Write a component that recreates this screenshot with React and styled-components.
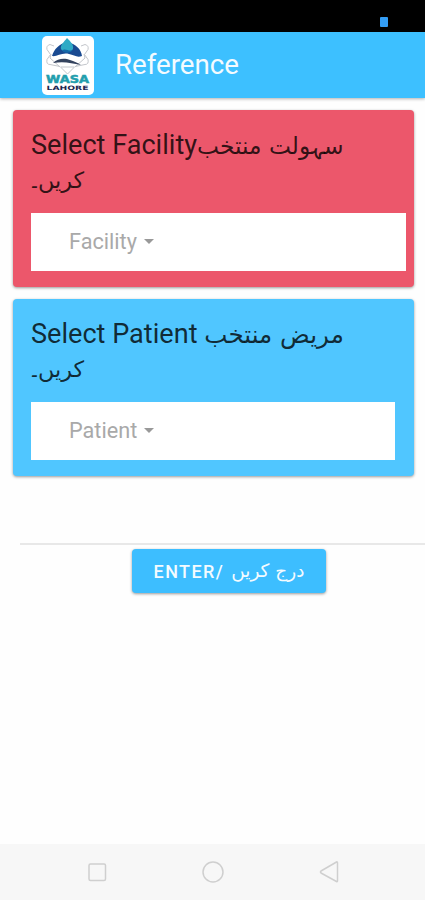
import React from "react";
import styled, { createGlobalStyle } from "styled-components";

const GlobalStyle = createGlobalStyle`
	* {
		box-sizing: border-box;
	}
	body {
		margin: 0;
		background: #fefefe;
		font-family: Roboto, "DejaVu Sans", sans-serif;
	}
`;

const Screen = styled.div`
	width: 100%;
	height: 900px;
	display: flex;
	flex-direction: column;
	overflow: hidden;
	background: #fefefe;
`;

const StatusBar = styled.div`
	height: 32px;
	padding: 0 37px 5px 0;
	display: flex;
	justify-content: flex-end;
	align-items: flex-end;
	background: #000;
`;

const Battery = styled.div`
	width: 8px;
	height: 10px;
	border-radius: 1px;
	background: #339df5;
`;

const Toolbar = styled.header`
	height: 66px;
	padding-left: 42px;
	display: flex;
	align-items: center;
	background: #3dc0ff;
	box-shadow: 0 1px 3px rgba(0, 0, 0, 0.3);
`;

const LogoTile = styled.div`
	width: 52px;
	height: 59px;
	border-radius: 5px;
	background: #fff;
`;

const Title = styled.h1`
	margin: 0 0 0 21px;
	font-size: 27.7px;
	line-height: 34px;
	font-weight: 400;
	color: #f4fbff;
`;

const Content = styled.main`
	flex: 1;
	padding-top: 12px;
`;

const Card = styled.section`
	height: 177px;
	margin: 0 11px 12px 13px;
	padding: 18px 0 0 18px;
	border-radius: 4px;
	background: ${props => props.$color};
	box-shadow: 0 1px 3px rgba(0, 0, 0, 0.4);
`;

const CardTitle = styled.h2`
	width: 330px;
	height: 68px;
	margin: 0 0 17px;
	font-size: 27.1px;
	line-height: 34px;
	font-weight: 400;
	color: rgba(0, 0, 0, 0.8);
`;

const Urdu = styled.span`
	font-family: "DejaVu Sans", sans-serif;
	font-size: ${props => props.$size}px;
	line-height: 1;
	letter-spacing: 0;
`;

// the Urdu full stop has wide side bearings
const Stop = styled.span`
	margin: 0 -3px 0 -3px;
`;

const Select = styled.div`
	width: ${props => props.$width}px;
	height: 58px;
	padding: 0 0 2px 38px;
	display: flex;
	align-items: center;
	background: #fff;
	font-size: 21.7px;
	color: #a9a9a9;
`;

const Caret = styled.span`
	margin-left: 7px;
	border: 5.5px solid transparent;
	border-top-color: #999;
	border-bottom: 0;
`;

const Divider = styled.hr`
	height: 2px;
	margin: 67px 0 4px 20px;
	border: 0;
	background: #e8e8e8;
`;

const EnterButton = styled.button`
	width: 194px;
	height: 44px;
	margin-left: 132px;
	padding: 1px 0 0;
	display: flex;
	justify-content: center;
	align-items: center;
	gap: 7px;
	border: 0;
	border-radius: 4px;
	background: #3dbeff;
	box-shadow: 0 1px 3px rgba(0, 0, 0, 0.4);
	font-family: Roboto, sans-serif;
	font-size: 18px;
	font-weight: 500;
	letter-spacing: 1.4px;
	color: #f4fbff;
`;

const NavBar = styled.nav`
	height: 56px;
	padding: 0 85px 0 86px;
	display: flex;
	justify-content: space-between;
	align-items: center;
	background: #f7f7f7;

	svg {
		fill: none;
		stroke: #cfcfcf;
		stroke-width: 1.5;
		stroke-linejoin: round;
	}
`;

function Logo() {
	return (
		<svg width="52" height="59" viewBox="0 0 52 59">
			<g fill="none" stroke="#c3c6cb" strokeWidth="1">
				<path d="M12 10l-4-1.500q-4 1-3 5l3.500 5-3.500 5q-1 5 3 5l10 2 7.500 7.500 7.500-7.500 10-2q4 0 3-5l-3.500-5 3.500-5q1-4-3-5l-4 1.500" />
				<path d="M9 18l-1 4 10 9M42 18l1 4-10 9M19 31h13" />
			</g>
			<path d="M10 20C12 13 17 8 25 6c9 2 14 7 15 14-5 2-8-1-13-2-7-2-12 3-17 2z" fill="#194a91" />
			<path d="M25 2c4 4 7 7 6 11-2 4-10 4-12 0-1-4 3-7 6-11z" fill="#2faac5" />
			<path d="M20 14c4-2 7 2 11 0-2 3-9 4-11 0z" fill="#1468a8" />
			<path d="M10 23c8-4 13-4 18-1 4 2 8 2 13 0-5 5-10 4-15 2-6-2-10-2-16-1z" fill="#fff" />
			<path d="M11 27c5-5 12-5 17-3 4 1 8 3 11 5-10-2-17-4-28-2z" fill="#34435e" />
			<g fontFamily="DejaVu Sans" fontWeight="700">
				<text
					x="4"
					y="46.500"
					textLength="43"
					lengthAdjust="spacingAndGlyphs"
					fontSize="10"
					fill="#229ead"
					stroke="#229ead"
					strokeWidth=".5"
				>
					WASA
				</text>
				<text x="4.500" y="54" textLength="42" lengthAdjust="spacingAndGlyphs" fontSize="6" fill="#1a2550">
					LAHORE
				</text>
			</g>
		</svg>
	);
}

export default function App() {
	return (
		<Screen>
			<GlobalStyle />
			<StatusBar>
				<Battery />
			</StatusBar>
			<Toolbar>
				<LogoTile>
					<Logo />
				</LogoTile>
				<Title>Reference</Title>
			</Toolbar>
			<Content>
				<Card $color="#ec576b">
					<CardTitle>
						Select Facility<Urdu $size={23.3}>سہولت منتخب</Urdu>{" "}
						<Urdu $size={22.3}>
							کریں<Stop>۔</Stop>
						</Urdu>
					</CardTitle>
					<Select $width={375}>
						Facility <Caret />
					</Select>
				</Card>
				<Card $color="#50c6ff">
					<CardTitle>
						Select Patient <Urdu $size={24.6}>مریض منتخب</Urdu>{" "}
						<Urdu $size={22.3}>
							کریں<Stop>۔</Stop>
						</Urdu>
					</CardTitle>
					<Select $width={364}>
						Patient <Caret />
					</Select>
				</Card>
				<Divider />
				<EnterButton>
					<span>ENTER/</span>
					<Urdu $size={18.5}>درج کریں</Urdu>
				</EnterButton>
			</Content>
			<NavBar>
				<svg width="22" height="22" viewBox="0 0 22 22">
					<rect x="3" y="3" width="16.5" height="16.5" rx="1.5" />
				</svg>
				<svg width="22" height="22" viewBox="0 0 22 22">
					<circle cx="11" cy="11" r="10" />
				</svg>
				<svg width="22" height="22" viewBox="0 0 22 22">
					<path d="M19.500 2v18q0 1-1 .5L3 12q-1-1 0-2l15.500-9q1-.5 1 1z" />
				</svg>
			</NavBar>
		</Screen>
	);
}
